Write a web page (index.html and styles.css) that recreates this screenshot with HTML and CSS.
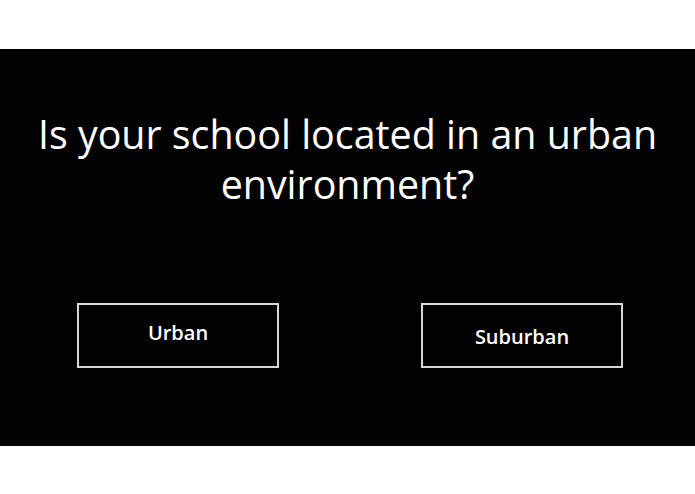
FILE: index.html
```html
<!DOCTYPE html>
<html>
<head>
<meta charset="utf-8">
<link rel="stylesheet" href="styles.css">
</head>
<body>
<main class="panel">
  <h1 class="question">Is your school located in an urban environment?</h1>
  <div class="choices">
    <button class="choice choice-urban">Urban</button>
    <button class="choice choice-suburban">Suburban</button>
  </div>
</main>
</body>
</html>
```
FILE: styles.css
```css
html, body {
  margin: 0;
  padding: 0;
  background: #ffffff;
}
body {
  width: 695px;
  height: 494px;
  overflow: hidden;
  font-family: "Open Sans", "Noto Sans", sans-serif;
}
.panel {
  margin-top: 49px;
  height: 397px;
  background: #020202;
  display: flex;
  flex-direction: column;
  align-items: center;
}
.question {
  margin: 0;
  padding-top: 60px;
  width: 670px;
  color: #ffffff;
  font-size: 39.4px;
  font-weight: 400;
  line-height: 50px;
  text-align: center;
}
.choices {
  margin-top: 94px;
  width: 100%;
  display: flex;
  justify-content: space-between;
  padding: 0 72px 0 77px;
  box-sizing: border-box;
}
.choice {
  width: 202px;
  height: 65px;
  box-sizing: border-box;
  background: transparent;
  border: 2px solid #d8d8d8;
  color: #ffffff;
  font-family: "Open Sans", "Noto Sans", sans-serif;
  font-size: 20px;
  font-weight: 600;
  padding: 0;
  display: flex;
  align-items: center;
  justify-content: center;
}
.choice-urban { padding-bottom: 6px; }
.choice-suburban { padding-top: 2px; }
```
